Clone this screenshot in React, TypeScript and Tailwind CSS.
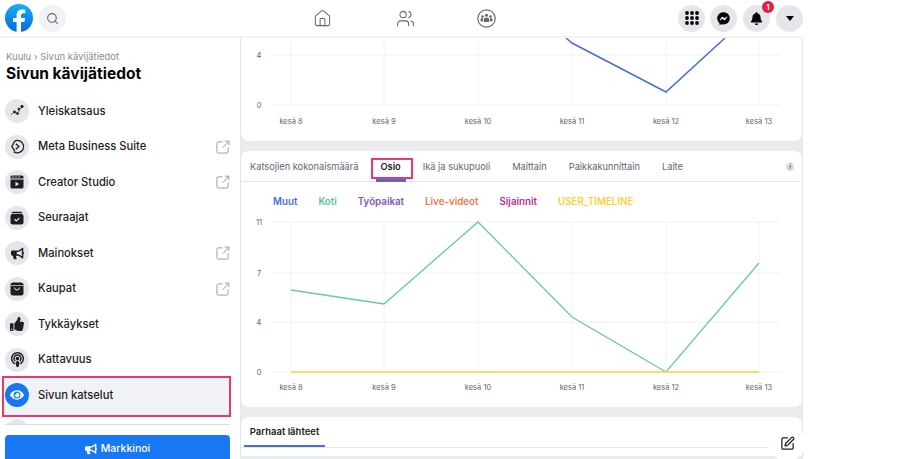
import React from 'react';
import { Home, Search, SquarePen, Users } from 'lucide-react';
import { FaBell, FaBullhorn, FaEye, FaFacebookMessenger, FaPodcast, FaThumbsUp } from 'react-icons/fa';

const ExternalIcon = () => (
  <svg width="14" height="14" viewBox="0 0 15 15" fill="none" stroke="#8a8d91" strokeWidth="0.9">
    <path d="M7 2H2.500A1.500 1.500 0 0 0 1 3.500V12.500A1.500 1.500 0 0 0 2.500 14H11.500A1.500 1.500 0 0 0 13 12.500V8" />
    <path d="M7 8.500L13.500 1.500M9.500 1.200H13.800V5.500" />
  </svg>
);

const OverviewIcon = () => (
  <svg width="14" height="14" viewBox="0 0 14 14" fill="none" stroke="#1c1e21" strokeWidth="0.8">
    <path d="M1 10.500L4.500 8L7.500 9.500L12 2.500" strokeDasharray="2 1.200" />
    <circle cx="4.500" cy="8" r="1.100" fill="#1c1e21" />
    <circle cx="7.500" cy="9.500" r="1.100" fill="#1c1e21" />
    <circle cx="12" cy="2.500" r="1.200" fill="#1c1e21" />
    <circle cx="8.800" cy="5" r="0.900" fill="#1c1e21" />
  </svg>
);

const MetaSuiteIcon = () => (
  <svg width="15" height="15" viewBox="0 0 16 16" fill="none" stroke="#1c1e21" strokeWidth="1.400">
    <path d="M5 2.200A6.600 6.600 0 1 1 4 13.500" />
    <path d="M5 2.200L2 8L5 13" />
    <path d="M6.200 5L9.500 8L6.200 11" />
  </svg>
);

const ClapperIcon = () => (
  <svg width="14" height="14" viewBox="0 0 14 14">
    <path d="M2 0.500H12A1.500 1.500 0 0 1 13.500 2V3.500H0.500V2A1.500 1.500 0 0 1 2 0.500Z" fill="#1c1e21" />
    <path d="M3 1L3 3M6 1L6 3M9 1L9 3" stroke="#e4e6eb" strokeWidth="0.800" />
    <path d="M0.500 4.500H13.500V12A1.500 1.500 0 0 1 12 13.500H2A1.500 1.500 0 0 1 0.500 12Z" fill="#1c1e21" />
    <path d="M5.500 6.700L9.200 9L5.500 11.300Z" fill="#e4e6eb" />
  </svg>
);

const FollowersIcon = () => (
  <svg width="14" height="14" viewBox="0 0 14 14">
    <path d="M3 0.800H11A1.500 1.500 0 0 1 12.500 2.300H1.500A1.500 1.500 0 0 1 3 0.800Z" fill="#1c1e21" />
    <rect x="0.500" y="3" width="13" height="10.500" rx="2.200" fill="#1c1e21" />
    <path d="M4.500 8.300L6.300 10L9.500 6.800" stroke="#e4e6eb" strokeWidth="1.200" fill="none" />
  </svg>
);

const ShopIcon = () => (
  <svg width="14" height="14" viewBox="0 0 14 14">
    <rect x="0.500" y="0.500" width="13" height="13" rx="2.500" fill="#1c1e21" />
    <path d="M0.500 3.500H13.500" stroke="#e4e6eb" strokeWidth="0.700" />
    <path d="M4.500 5.500A2.500 2.500 0 0 0 9.500 5.500" stroke="#e4e6eb" strokeWidth="1" fill="none" />
  </svg>
);

const GroupsIcon = () => (
  <svg width="19" height="19" viewBox="0 0 19 19" className="-ml-[2px]">
    <circle cx="9.500" cy="9.500" r="8.700" fill="none" stroke="#65676b" strokeWidth="1.200" />
    <circle cx="9.500" cy="6.300" r="1.500" fill="#65676b" />
    <circle cx="5.500" cy="7.600" r="1.300" fill="#65676b" />
    <circle cx="13.500" cy="7.600" r="1.300" fill="#65676b" />
    <path d="M6.800 13V10.500A1.500 1.500 0 0 1 8.300 8.800H10.700A1.500 1.500 0 0 1 12.200 10.500V13Z" fill="#65676b" />
    <path d="M3.500 12.200V10.300A1 1 0 0 1 4.500 9.300H6V12.500ZM15.500 12.200V10.300A1 1 0 0 0 14.500 9.300H13V12.500Z" fill="#65676b" />
  </svg>
);

const AppsIcon = () => (
  <svg width="14" height="14" viewBox="0 0 14 14" fill="#050505">
    {[2, 7, 12].map((y) =>
      [2, 7, 12].map((x) => <circle key={`${x}-${y}`} cx={x} cy={y} r="1.900" />)
    )}
  </svg>
);

const FacebookLogo = () => (
  <svg width="28" height="28" viewBox="0 0 28 28">
    <defs>
      <linearGradient id="fb" x1="0" y1="0" x2="0" y2="1">
        <stop offset="0" stopColor="#19aff4" />
        <stop offset="1" stopColor="#0567e0" />
      </linearGradient>
    </defs>
    <circle cx="14" cy="14" r="14" fill="url(#fb)" />
    <path d="M19.400 18L20.100 14H16V11.600C16 10.300 16.600 9.300 18.300 9.300H20.200V5.700C19.200 5.500 18.100 5.400 17 5.400C13.700 5.400 11.600 7.300 11.600 11V14H8V18H11.600V28H16V18Z" fill="#fff" />
  </svg>
);

const menuItems = [
  { label: 'Yleiskatsaus', icon: <OverviewIcon /> },
  { label: 'Meta Business Suite', icon: <MetaSuiteIcon />, external: true },
  { label: 'Creator Studio', icon: <ClapperIcon />, external: true },
  { label: 'Seuraajat', icon: <FollowersIcon /> },
  { label: 'Mainokset', icon: <FaBullhorn size={13} color="#1c1e21" />, external: true },
  { label: 'Kaupat', icon: <ShopIcon />, external: true },
  { label: 'Tykkäykset', icon: <FaThumbsUp size={14} color="#1c1e21" /> },
  { label: 'Kattavuus', icon: <FaPodcast size={15} color="#1c1e21" /> },
];

const tabs = ['Katsojien kokonaismäärä', 'Osio', 'Ikä ja sukupuoli', 'Maittain', 'Paikkakunnittain', 'Laite'];

const legend = [
  { label: 'Muut', color: 'text-[#4a6fd0]' },
  { label: 'Koti', color: 'text-[#5cc3a0]' },
  { label: 'Työpaikat', color: 'text-[#7e57c2]' },
  { label: 'Live-videot', color: 'text-[#f0784a]' },
  { label: 'Sijainnit', color: 'text-[#b5308f]' },
  { label: 'USER_TIMELINE', color: 'text-[#f9d133]' },
];

const days = [
  { x: 50, label: 'kesä 8' },
  { x: 143, label: 'kesä 9' },
  { x: 237, label: 'kesä 10' },
  { x: 331, label: 'kesä 11' },
  { x: 425, label: 'kesä 12' },
  { x: 518, label: 'kesä 13' },
];

const Chart = ({
  height,
  ticks,
  labelY,
  top,
  children,
}: {
  height: number;
  ticks: { y: number; label: string }[];
  labelY: number;
  top: number;
  children: React.ReactNode;
}) => (
  <svg width="561" height={height} viewBox={`0 0 561 ${height}`} className="block" fontFamily="Inter, sans-serif">
    {days.map((d) => (
      <line key={d.x} x1={d.x} x2={d.x} y1={top} y2={labelY - 16} stroke="#f1f2f4" />
    ))}
    {ticks.map((t) => (
      <g key={t.label}>
        <line x1="31" x2="540" y1={t.y} y2={t.y} stroke="#f1f2f4" />
        <text x="18" y={t.y + 3} textAnchor="middle" fontSize="7.500" fill="#606770">
          {t.label}
        </text>
      </g>
    ))}
    {days.map((d) => (
      <text key={d.x} x={d.x} y={labelY + 3} textAnchor="middle" fontSize="7.500" fill="#606770">
        {d.label}
      </text>
    ))}
    {children}
  </svg>
);

export default function App() {
  return (
    <div className="relative w-[920px] h-[459px] overflow-hidden bg-white font-['Inter',sans-serif] text-[#1c1e21]">
      <header className="flex h-[38px] w-[803px] items-center border-b-2 border-[#f0f2f5] bg-white">
        <div className="flex w-[241px] items-center gap-[6px] pl-[5px]">
          <FacebookLogo />
          <div className="flex h-[27px] w-[27px] items-center justify-center rounded-full bg-[#f0f2f5]">
            <Search size={13} color="#65676b" />
          </div>
        </div>
        <div className="ml-[72px] flex items-center gap-[64px]">
          <Home size={19} color="#65676b" strokeWidth={1.300} />
          <Users size={19} color="#65676b" strokeWidth={1.300} />
          <GroupsIcon />
        </div>
        <div className="ml-auto flex items-center gap-[6px]">
          <div className="-mr-[1px] flex h-[27px] w-[27px] items-center justify-center rounded-full bg-[#e4e6eb]">
            <AppsIcon />
          </div>
          <div className="flex h-[27px] w-[27px] items-center justify-center rounded-full bg-[#e4e6eb]">
            <FaFacebookMessenger size={13} color="#050505" />
          </div>
          <div className="relative flex h-[27px] w-[27px] items-center justify-center rounded-full bg-[#e4e6eb]">
            <FaBell size={13} color="#050505" />
            <span className="absolute -right-[4px] -top-[4px] flex h-[12px] w-[12px] items-center justify-center rounded-full bg-[#e41e3f] text-[8px] font-semibold text-white">
              1
            </span>
          </div>
          <div className="flex h-[27px] w-[27px] items-center justify-center rounded-full bg-[#e4e6eb]">
            <div className="h-0 w-0 border-x-[4px] border-t-[5px] border-x-transparent border-t-[#050505]" />
          </div>
        </div>
      </header>

      <div className="flex h-[421px]">
        <aside className="flex w-[241px] flex-col border-r border-[#e4e6eb] bg-white">
          <div className="shrink-0 px-[6px] pt-[13px]">
            <div className="text-[9.500px] leading-[12px] text-[#8a8d91]">Kuulu › Sivun kävijätiedot</div>
            <h1 className="mt-[1px] text-[15.500px] font-bold leading-[20px] text-[#050505]">Sivun kävijätiedot</h1>
          </div>
          <nav className="mt-[9.500px] h-[330px] shrink-0 overflow-hidden pl-[5px] pr-[10px]">
            {menuItems.map((item) => (
              <div key={item.label} className="flex h-[35.500px] items-center">
                <div className="flex h-[24px] w-[24px] items-center justify-center rounded-full bg-[#e4e6eb]">
                  {item.icon}
                </div>
                <span className="ml-[9px] text-[11.200px] font-medium text-[#1c1e21]">{item.label}</span>
                {item.external && (
                  <span className="ml-auto flex">
                    <ExternalIcon />
                  </span>
                )}
              </div>
            ))}
            <div className="relative flex h-[35.500px] items-center">
              <div className="absolute -left-[3px] -right-[1px] -top-[2px] h-[41px] border-2 border-[#e8386f] bg-[#f0f2f5]" />
              <div className="relative flex h-[24px] w-[24px] items-center justify-center rounded-full bg-[#1877f2]">
                <FaEye size={14} color="#fff" />
              </div>
              <span className="relative ml-[9px] text-[11.200px] font-medium text-[#1c1e21]">Sivun katselut</span>
            </div>
            <div className="mt-[6px] h-[24px] w-[24px] rounded-full bg-[#e4e6eb]" />
          </nav>
          <div className="ml-[5px] mr-[10px] h-[1px] shrink-0 bg-[#dadde1]" />
          <div className="pl-[5px] pr-[10px] pt-[10px]">
            <button className="flex h-[28px] w-full items-center justify-center gap-[4px] rounded-[4px] bg-[#1877f2] text-[10.500px] font-medium text-white">
              <FaBullhorn size={12} color="#fff" />
              Markkinoi
            </button>
          </div>
        </aside>

        <main className="flex w-[562px] flex-col gap-[10px] border-r border-[#e4e6eb] bg-[#e9ebee]">
          <section className="h-[103px] shrink-0 rounded-b-[8px] bg-white">
            <Chart height={102} top={2} labelY={83} ticks={[{ y: 17, label: '4' }, { y: 67, label: '0' }]}>
              <polyline points="325,0 331,5 425,54 484,0" fill="none" stroke="#4a6fd0" strokeWidth="1.500" />
            </Chart>
          </section>

          <section className="h-[256px] shrink-0 rounded-[8px] bg-white">
            <div className="relative flex h-[31px] items-center gap-[22px] border-b border-[#e4e6eb] pl-[9px] pt-[1px] text-[9.250px] leading-[12px] text-[#606770]">
              {tabs.map((tab) =>
                tab === 'Osio' ? (
                  <span key={tab} className="relative font-semibold text-[#1c1e21]">
                    {tab}
                    <span className="absolute -left-[5px] -right-[5px] top-[18px] h-[3px] bg-[#4a6fd0]" />
                    <span className="absolute -left-[10px] -right-[12px] -top-[3px] h-[21px] border-2 border-[#e8386f]" />
                  </span>
                ) : (
                  <span key={tab}>{tab}</span>
                )
              )}
              <span className="absolute right-[8px] top-[12px] flex h-[8px] w-[8px] items-center justify-center rounded-full bg-[#dadde1] text-[6px] font-bold italic text-[#606770]">
                i
              </span>
            </div>
            <div className="flex gap-[21px] pb-[1px] pl-[32px] pt-[13px] text-[9.750px] font-semibold leading-[13px]">
              {legend.map((item) => (
                <span key={item.label} className={item.color}>
                  {item.label}
                </span>
              ))}
            </div>
            <Chart
              height={197}
              top={13}
              labelY={178}
              ticks={[
                { y: 13, label: '11' },
                { y: 64, label: '7' },
                { y: 113, label: '4' },
                { y: 163, label: '0' },
              ]}
            >
              <polyline points="50,81 143,95 237,13 331,108 425,163 518,54" fill="none" stroke="#6cc5a6" strokeWidth="1.300" />
              <line x1="50" x2="518" y1="163" y2="163" stroke="#f7d046" strokeWidth="1.300" />
            </Chart>
          </section>

          <section className="h-[39px] shrink-0 rounded-t-[8px] bg-white">
            <div className="h-[31px] border-b border-[#e4e6eb] pl-[3px]">
              <div className="flex h-[30px] w-[81px] items-center justify-center border-b-2 border-[#4a6fd0] pt-[2px] text-[9.500px] font-semibold text-[#1c1e21]">
                Parhaat lähteet
              </div>
            </div>
          </section>
        </main>
      </div>

      <div className="absolute left-[769px] top-[425px] flex h-[36px] w-[36px] items-center justify-center rounded-full bg-white">
        <SquarePen size={15} color="#1c1e21" strokeWidth={2} />
      </div>
    </div>
  );
}
